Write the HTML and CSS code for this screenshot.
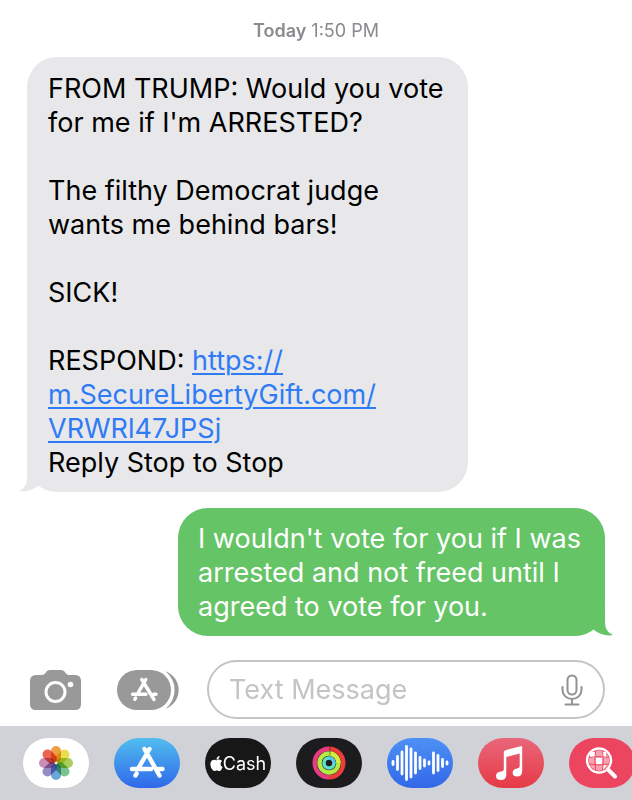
FILE: index.html
```html
<!DOCTYPE html>
<html lang="en">
  <head>
    <meta charset="utf-8" />
    <meta name="viewport" content="width=device-width, initial-scale=1" />
    <title>Messages</title>
    <link rel="stylesheet" href="styles.css" />
  </head>

  <body>
    <main class="thread">
      <p class="timestamp"><b>Today</b> 1:50 PM</p>

      <div class="bubble received">
        <p>FROM TRUMP: Would you vote<br />for me if I'm ARRESTED?</p>
        <p>The filthy Democrat judge<br />wants me behind bars!</p>
        <p>SICK!</p>
        <p>
          RESPOND:
          <a href="#">https://<br />m.SecureLibertyGift.com/<br />VRWRl47JPSj</a><br />Reply Stop to Stop
        </p>
        <svg class="tail" width="28" height="28" viewBox="0 0 28 28" aria-hidden="true">
          <path d="M8 0V14Q8 24 0 27Q10 29 19 22L28 14V0Z" />
        </svg>
      </div>

      <div class="bubble sent">
        <p>I wouldn't vote for you if I was<br />arrested and not freed until I<br />agreed to vote for you.</p>
        <svg class="tail" width="28" height="28" viewBox="0 0 28 28" aria-hidden="true">
          <path d="M8 0V14Q8 24 0 27Q10 29 19 22L28 14V0Z" />
        </svg>
      </div>
    </main>

    <!-- Message box -->
    <form class="composer">
      <button type="button" class="tool" aria-label="Camera">
        <svg width="51" height="40" viewBox="0 0 51 40">
          <path fill="#999" d="M6 5H12Q14 5 15.500 3L16.500 1.500Q17.500 0 20 0H31Q33.500 0 34.500 1.500L35.500 3Q37 5 39 5H45Q51 5 51 11V34Q51 40 45 40H6Q0 40 0 34V11Q0 5 6 5Z" />
          <circle cx="25.500" cy="22" r="9.500" fill="none" stroke="#fff" stroke-width="3" />
          <circle cx="40.500" cy="14.500" r="2.800" fill="#fff" />
        </svg>
      </button>
      <button type="button" class="tool" aria-label="Apps">
        <svg width="62" height="40" viewBox="0 0 62 40">
          <path fill="#999" d="M48.500 1.200A20 20 0 0 1 48.500 38.800A24 24 0 0 0 48.500 1.200Z" />
          <rect width="54" height="40" rx="20" fill="#999" />
          <g fill="none" stroke="#fff" stroke-width="3.400" stroke-linecap="round">
            <path d="M28.800 9.500L21 23M24.800 9.500L37 29.500M15.500 24.300H29M36.500 24.300H39M18.600 28L17.800 29.300" />
          </g>
        </svg>
      </button>
      <div class="field">
        <input type="text" placeholder="Text Message" aria-label="Text Message" />
        <button type="button" class="mic" aria-label="Dictate">
          <svg width="22" height="32" viewBox="0 0 22 32" fill="none" stroke="#929296" stroke-width="2" stroke-linecap="round">
            <rect x="6.500" y="1.500" width="9" height="19" rx="4.500" />
            <path d="M1.500 13V16A9.500 9 0 0 0 20.500 16V13M11 25V30M4.500 30.500H17.500" />
          </svg>
        </button>
      </div>
    </form>

    <!-- App drawer -->
    <nav class="drawer" aria-label="Apps">
      <button type="button" class="app photos" aria-label="Photos">
        <svg width="66" height="50" viewBox="0 0 66 50">
          <g class="petals">
            <rect x="28" y="8" width="10" height="16" rx="5" fill="#f0a044" />
            <rect x="28" y="8" width="10" height="16" rx="5" fill="#e8df4a" transform="rotate(45 33 25)" />
            <rect x="28" y="8" width="10" height="16" rx="5" fill="#accf5c" transform="rotate(90 33 25)" />
            <rect x="28" y="8" width="10" height="16" rx="5" fill="#78c28e" transform="rotate(135 33 25)" />
            <rect x="28" y="8" width="10" height="16" rx="5" fill="#6ca5da" transform="rotate(180 33 25)" />
            <rect x="28" y="8" width="10" height="16" rx="5" fill="#978bc4" transform="rotate(225 33 25)" />
            <rect x="28" y="8" width="10" height="16" rx="5" fill="#c98fb9" transform="rotate(270 33 25)" />
            <rect x="28" y="8" width="10" height="16" rx="5" fill="#e96455" transform="rotate(315 33 25)" />
          </g>
        </svg>
      </button>
      <button type="button" class="app store" aria-label="App Store">
        <svg width="66" height="50" viewBox="0 0 66 50" fill="none" stroke="#fff" stroke-width="4.400" stroke-linecap="round">
          <path d="M35.500 11L24.500 30M30.500 11L45.500 37.500M18 31H37M45 31H48.500M22.600 35.500L21.500 37.500" />
        </svg>
      </button>
      <button type="button" class="app cash" aria-label="Apple Cash">
        <svg width="13" height="15" viewBox="2 0 20 24" fill="#fff">
          <path d="M12.152 6.896c-.948 0-2.415-1.078-3.96-1.040-2.040.027-3.910 1.183-4.961 3.014-2.117 3.675-.546 9.103 1.519 12.090 1.013 1.454 2.208 3.090 3.792 3.039 1.520-.065 2.090-.987 3.935-.987 1.831 0 2.350.987 3.960.948 1.637-.026 2.676-1.480 3.676-2.948 1.156-1.688 1.636-3.325 1.662-3.415-.039-.013-3.182-1.221-3.220-4.857-.026-3.040 2.480-4.494 2.597-4.559-1.429-2.090-3.623-2.324-4.390-2.376-2-.156-3.675 1.090-4.610 1.090zM15.530 3.830c.843-1.012 1.400-2.427 1.245-3.830-1.207.052-2.662.805-3.532 1.818-.780.896-1.454 2.338-1.273 3.714 1.338.104 2.715-.688 3.559-1.701" />
        </svg>
        <span>Cash</span>
      </button>
      <button type="button" class="app fitness" aria-label="Fitness">
        <svg width="66" height="50" viewBox="0 0 66 50" fill="none" stroke-width="4.400">
          <path d="M33 10.700A14.300 14.300 0 0 1 33 39.300" stroke="#ee3b3c" />
          <path d="M33 39.300A14.300 14.300 0 0 1 33 10.700" stroke="#e83a82" />
          <circle cx="33" cy="25" r="9.500" stroke="#b5ea45" />
          <path d="M34 15.500A9.500 9.500 0 0 1 42.500 25" stroke="#d3ee3f" />
          <circle cx="33" cy="25" r="5" stroke="#5ce0c8" stroke-width="3.600" />
          <path d="M33 20A5 5 0 0 1 38 25" stroke="#58c5e8" stroke-width="3.600" />
          <path d="M34 8.500V17.500" stroke="#1c1c1e" stroke-width="1" opacity=".5" />
        </svg>
      </button>
      <button type="button" class="app audio" aria-label="Audio">
        <svg width="66" height="50" viewBox="0 0 66 50" stroke="#fff" stroke-width="2.800" stroke-linecap="round">
          <path d="M6 23.500V26.500M10.500 18.500V31.500M15 14V36M19.500 8.500V41.500M24 11V39M28.500 15V35M33 19.500V30.500M37.500 22V28M42 24V26M46.500 15V35M51 17.500V32.500M55.500 21.500V28.500M60 24V26" />
        </svg>
      </button>
      <button type="button" class="app music" aria-label="Music">
        <svg width="66" height="50" viewBox="0 0 66 50" fill="#fff">
          <path d="M25.800 14.500Q25.800 12.700 27.500 12.200L42.500 8.200Q44.200 7.800 44.200 9.500V33Q44.200 38.500 39 38.500Q34.600 38.500 34.600 34.800Q34.600 31.200 39 30.500Q41.700 30.200 41.700 28V15.500L28.300 19V36.500Q28.300 42 22.800 42Q18 42 18 38Q18 34.200 22.800 33.500Q25.800 33.200 25.800 31Z" />
        </svg>
      </button>
      <button type="button" class="app images" aria-label="#images">
        <svg width="66" height="50" viewBox="0 0 66 50" fill="none" stroke="#fff">
          <circle cx="30" cy="22.500" r="10.300" fill="#f7a3b2" stroke="none" />
          <path fill="#fff" stroke="none" d="M27 20H33V26H27ZM21 14H27V20H21ZM33 26H38L34 32ZM33 14H37V20H33Z" />
          <path stroke="#eb4560" d="M20 19.500Q30 17.500 40 19.500M20 26Q30 28 40 26M26.700 12.500Q25 22 26.700 33M33.500 12.500Q35 22 33.500 33" />
          <circle cx="30" cy="22.500" r="12" stroke-width="2.400" />
          <path d="M39 31.500L46 38.500" stroke-width="4" stroke-linecap="round" />
        </svg>
      </button>
    </nav>
  </body>
</html>
```

FILE: styles.css
```css
* {
  box-sizing: border-box;
}
body {
  margin: 0;
  min-height: 100vh;
  display: flex;
  flex-direction: column;
  overflow-x: hidden;
  background: #fff;
  color: #000;
  font-family: Inter, "Liberation Sans", sans-serif;
}
p {
  margin: 0;
}
button {
  padding: 0;
  border: 0;
  background: none;
  cursor: pointer;
}
svg {
  display: block;
}

/* Conversation */
.thread {
  flex: 1;
  display: flex;
  flex-direction: column;
  gap: 16px;
  padding: 20px 27px;
}
.timestamp {
  text-align: center;
  font-size: 18px;
  line-height: 21px;
  color: #8a8a8e;
}
.timestamp b {
  font-weight: 600;
}
.bubble {
  position: relative;
  display: flex;
  flex-direction: column;
  gap: 34px;
  padding: 14px 20px 12px;
  border-radius: 30px;
  font-size: 27px;
  line-height: 34px;
}
.received {
  align-self: flex-start;
  width: 441px;
  max-width: 100%;
  padding-top: 15px;
  padding-left: 21px;
  background: #e8e8ea;
}
.received a {
  color: #2f7bf6;
  text-decoration-thickness: 2px;
  text-underline-offset: 3px;
}
.sent {
  align-self: flex-end;
  width: 427px;
  max-width: 100%;
  background: #65c466;
  color: #fff;
}
.tail {
  position: absolute;
  bottom: 0;
  left: -8px;
  fill: #e8e8ea;
}
.sent .tail {
  left: auto;
  right: -8px;
  fill: #65c466;
  transform: scaleX(-1);
}

/* Message box */
.composer {
  display: flex;
  align-items: center;
  gap: 36px;
  padding: 4px 27px 7px 30px;
}
.tool {
  flex: none;
}
.field {
  flex: 1;
  min-width: 0;
  display: flex;
  align-items: center;
  height: 59px;
  margin-left: -8px;
  padding: 0 20px;
  border: 2px solid #c4c4c6;
  border-radius: 30px;
}
.field input {
  flex: 1;
  min-width: 0;
  padding: 0;
  border: 0;
  outline: 0;
  background: none;
  font: inherit;
  font-size: 27px;
}
.field input::placeholder {
  color: #c4c4c6;
  opacity: 1;
}

/* App drawer */
.drawer {
  display: flex;
  gap: 25px;
  padding: 12px 0 12px 23px;
  overflow: hidden;
  background: #d1d2d8;
}
.app {
  flex: none;
  display: flex;
  align-items: center;
  justify-content: center;
  width: 66px;
  height: 50px;
  border-radius: 25px;
  overflow: hidden;
}
.photos {
  background: #fff;
}
.petals {
  isolation: isolate;
}
.petals rect {
  mix-blend-mode: multiply;
}
.store {
  background: linear-gradient(#51bdef, #2f68ea);
}
.cash {
  background: #171717;
  color: #fff;
  font-family: inherit;
  font-size: 18px;
}
.fitness {
  background: #1c1c1e;
}
.audio {
  background: linear-gradient(#4d90f5, #3268e8);
}
.music {
  background: linear-gradient(#e9667a, #e63a46);
}
.images {
  background: #eb4560;
}
```
